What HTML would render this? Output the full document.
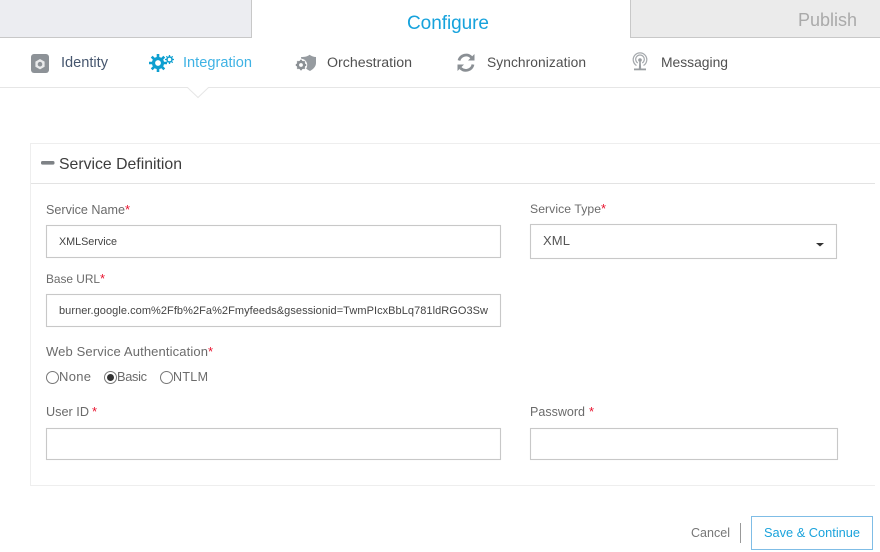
<!DOCTYPE html>
<html><head><meta charset="utf-8"><style>
html,body{margin:0;padding:0;background:#fff;width:880px;height:552px;overflow:hidden}
svg{display:block}
text{font-family:"Liberation Sans",sans-serif;font-size:13px;fill:#6b6b6b}
.box{fill:#fff;stroke:#c8c8c8;stroke-width:1.100}
.r{fill:#e8112d}
</style></head><body>
<svg width="880" height="552" viewBox="0 0 880 552" xmlns="http://www.w3.org/2000/svg">
<!-- tabs -->
<rect x="-2" y="-2" width="253.500" height="39.500" fill="#ecedf1" stroke="#c8c8c8"/>
<rect x="630.500" y="-2" width="252" height="39.500" fill="#ebebeb" stroke="#c8c8c8"/>
<text x="407" y="29" style="font-size:19px;fill:#16a2dc" textLength="82">Configure</text>
<text x="798" y="26" style="font-size:18px;fill:#aaa" textLength="59">Publish</text>
<!-- nav line -->
<path d="M0 87.500H187.500L198 97.500L208.500 87.500H880" fill="#fff" stroke="#e6e6e6"/>
<!-- identity icon -->
<rect x="31" y="54" width="18" height="19" rx="3" fill="#8d9297"/>
<path d="M40 59l4.600 2.600v5.200L40 69.400l-4.600-2.600v-5.200z" fill="#e9eaeb"/>
<circle cx="40" cy="64.200" r="2.300" fill="#8d9297"/>
<text x="61" y="67" style="font-size:14.600px;fill:#46566e" textLength="47">Identity</text>
<!-- integration icon -->
<g fill="none" stroke="#0e9fd0">
<circle cx="158" cy="63" r="4.500" stroke-width="3.200"/>
<path d="M158 54v3.500M158 68.500V72M149 63h3.500M163.500 63H167M151.700 56.700l2.400 2.400M161.900 66.900l2.400 2.400M151.700 69.300l2.400-2.400M161.900 59.100l2.400-2.400" stroke-width="2.600"/>
<circle cx="169.500" cy="59.500" r="2.500" stroke-width="1.500"/>
<path d="M169.500 55v1.500M169.500 62.500V64M165 59.500h1.500M172.500 59.500H174M166.300 56.300l1 1M171.700 61.700l1 1M166.300 62.700l1-1M171.700 57.300l1-1" stroke-width="1.300"/>
</g>
<text x="183" y="67" style="font-size:14.600px;fill:#3fb2e4" textLength="69">Integration</text>
<!-- orchestration icon -->
<path d="M301 57c4 0 7-.800 8.500-2.300 1.800 1.300 4.300 2.200 6.500 2.300v6c0 3.500-2.800 6.300-6 8-3-1.400-6-3.800-8-7z" fill="#969ba0"/>
<circle cx="301" cy="65" r="6.200" fill="#fff"/>
<circle cx="301" cy="65" r="3.200" fill="none" stroke="#8b9095" stroke-width="2.600"/>
<path d="M301 59.800v1.800M301 68.400v1.800M295.800 65h1.800M304.400 65h1.800M297.300 61.300l1.200 1.200M303.500 67.500l1.200 1.200M297.300 68.700l1.200-1.200M303.500 62.500l1.200-1.200" stroke="#8b9095" stroke-width="1.900"/>
<text x="327" y="67" style="font-size:14.200px;fill:#505050" textLength="85">Orchestration</text>
<!-- sync icon -->
<g fill="none" stroke="#8a8f94" stroke-width="2.800">
<path d="M459 60.500a7.300 7.300 0 0 1 12.500-3"/>
<path d="M473 64.500a7.300 7.300 0 0 1-12.500 3.500"/>
</g>
<path d="M474.500 54v6.500h-6.500z" fill="#8a8f94"/>
<path d="M457.500 71v-6.500h6.500z" fill="#8a8f94"/>
<text x="487" y="67" style="font-size:13.800px;fill:#505050" textLength="99">Synchronization</text>
<!-- messaging icon -->
<g fill="none" stroke="#a5a9ad" stroke-width="1.200">
<path d="M636.500 65.500a6.800 6.800 0 1 1 7 0"/>
<path d="M637.800 63a4.300 4.300 0 1 1 4.400 0"/>
</g>
<circle cx="640" cy="60" r="1.800" fill="#999da1"/>
<path d="M639.300 61h1.400l.5 8h-2.400z" fill="#999da1"/>
<rect x="634" y="68.500" width="12" height="1.800" fill="#999da1"/>
<text x="661" y="67" style="font-size:13.900px;fill:#505050" textLength="67">Messaging</text>
<!-- panel -->
<path d="M880 143.500H30.500V485.500H875" fill="none" stroke="#eeeeee"/>
<path d="M31 183.500H875" stroke="#e3e3e3"/>
<rect x="41" y="161" width="13.500" height="3.600" rx="1.500" fill="#7e8286"/>
<text x="59" y="169" style="font-size:15.800px;fill:#3d3d3d" textLength="123">Service Definition</text>
<!-- fields -->
<text x="46" y="214" style="font-size:12.600px" textLength="79">Service Name</text><text x="125" y="214" class="r" style="font-size:13px">*</text>
<rect x="46.500" y="225.500" width="454" height="32" class="box"/>
<text x="59" y="245" style="font-size:10.800px;fill:#444" textLength="58">XMLService</text>
<text x="530" y="213" style="font-size:12.200px" textLength="71">Service Type</text><text x="601" y="213" class="r" style="font-size:13px">*</text>
<rect x="530.500" y="224.500" width="306" height="34" class="box"/>
<text x="543" y="245" style="font-size:13px;fill:#555" textLength="27">XML</text>
<path d="M816 243h8l-4 3.500z" fill="#333"/>
<text x="46" y="283" style="font-size:11.900px" textLength="54">Base URL</text><text x="100" y="283" class="r" style="font-size:13px">*</text>
<rect x="46.500" y="294.500" width="454" height="32" class="box"/>
<text x="59" y="314" style="font-size:11px;fill:#444" textLength="429">burner.google.com%2Ffb%2Fa%2Fmyfeeds&amp;gsessionid=TwmPIcxBbLq781ldRGO3Sw</text>
<text x="46" y="356" style="font-size:13px" textLength="162">Web Service Authentication</text><text x="208" y="356" class="r" style="font-size:13px">*</text>
<!-- radios -->
<circle cx="52.500" cy="377.500" r="6" fill="#fff" stroke="#777" stroke-width="1"/>
<text x="59" y="381" style="font-size:13px" textLength="32">None</text>
<circle cx="110.500" cy="377.500" r="6" fill="#fff" stroke="#777" stroke-width="1"/>
<circle cx="110.500" cy="377.500" r="3.500" fill="#333"/>
<text x="117" y="381" style="font-size:12.800px" textLength="30">Basic</text>
<circle cx="166.500" cy="377.500" r="6" fill="#fff" stroke="#777" stroke-width="1"/>
<text x="173" y="381" style="font-size:12.500px" textLength="35">NTLM</text>
<text x="46" y="416" style="font-size:12.700px" textLength="43">User ID</text><text x="92" y="416" class="r" style="font-size:13px">*</text>
<rect x="46.500" y="428.500" width="454" height="31" class="box"/>
<text x="530" y="416" style="font-size:12.500px" textLength="55">Password</text><text x="589" y="416" class="r" style="font-size:13px">*</text>
<rect x="530.500" y="428.500" width="307" height="31" class="box"/>
<!-- buttons -->
<text x="691" y="537" style="font-size:12.500px;fill:#777" textLength="39">Cancel</text>
<path d="M740.500 523v20" stroke="#999"/>
<rect x="751.500" y="516.500" width="121" height="33" fill="#fff" stroke="#7fbde6"/>
<text x="764" y="537" style="font-size:12.800px;fill:#1ba3dc" textLength="96">Save &amp; Continue</text>
</svg>
</body></html>
